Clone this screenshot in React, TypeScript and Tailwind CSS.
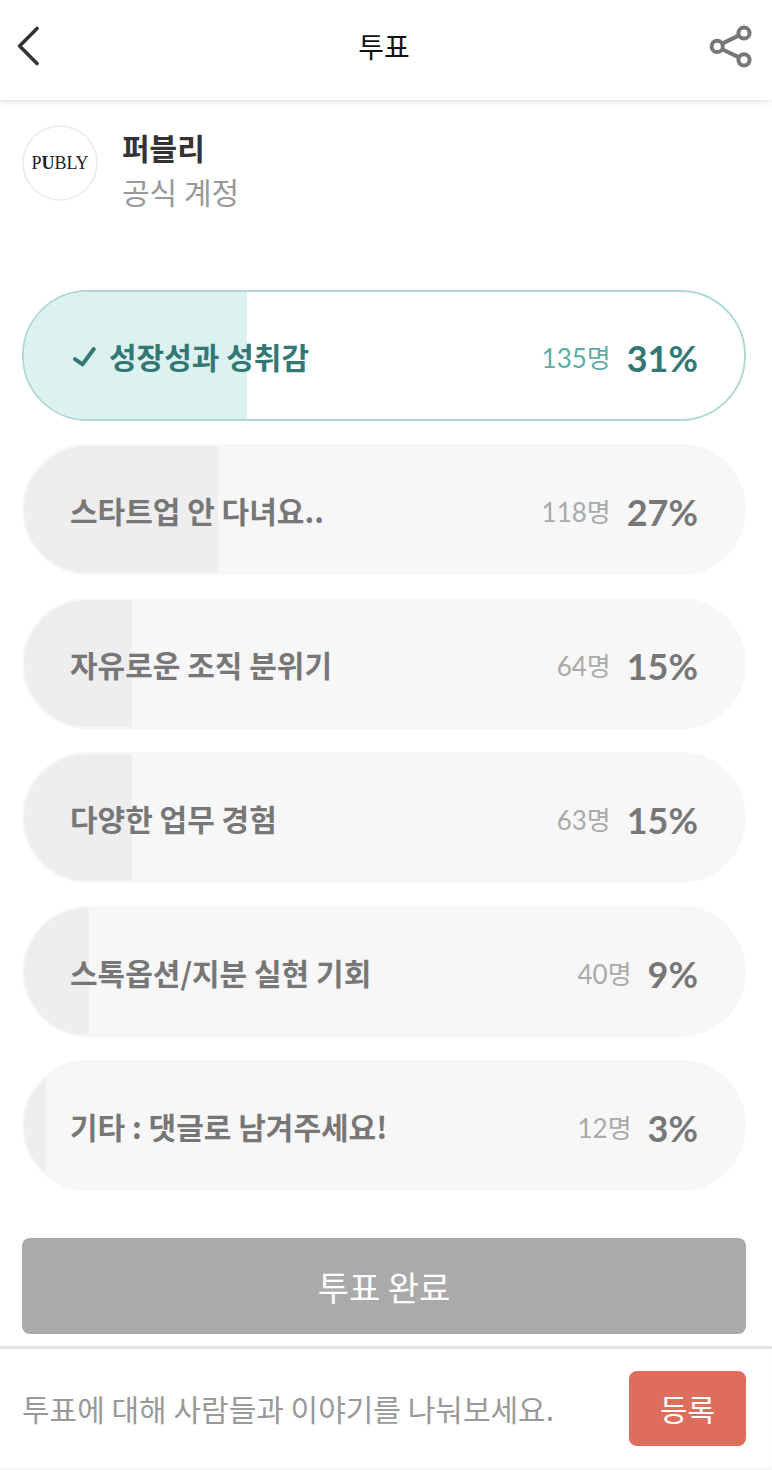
import { useState } from "react";

type Option = { label: string; count: number; percent: number };

const OPTIONS: Option[] = [
  { label: "성장성과 성취감", count: 135, percent: 31 },
  { label: "스타트업 안 다녀요..", count: 118, percent: 27 },
  { label: "자유로운 조직 분위기", count: 64, percent: 15 },
  { label: "다양한 업무 경험", count: 63, percent: 15 },
  { label: "스톡옵션/지분 실현 기회", count: 40, percent: 9 },
  { label: "기타 : 댓글로 남겨주세요!", count: 12, percent: 3 },
];

function Header() {
  return (
    <header className="relative z-10 grid h-[100px] grid-cols-[1fr_auto_1fr] items-center bg-white pb-2 pl-4 pr-5 shadow-[0_1px_7px_rgba(0,0,0,0.15)]">
      <button type="button" aria-label="뒤로" className="justify-self-start">
        <svg width="26" height="40" viewBox="0 0 26 40" fill="none" stroke="#333333" strokeWidth="3.6" strokeLinecap="round" strokeLinejoin="round" className="block">
          <path d="M21 2.5L3.6 20L21 37.5" />
        </svg>
      </button>
      <h1 className="text-[28px] leading-10 font-normal text-[#111111]">투표</h1>
      <button type="button" aria-label="공유" className="justify-self-end">
        <svg width="44" height="44" viewBox="0 0 44 44" fill="none" stroke="#777777" strokeWidth="4" className="block">
          <circle cx="9.2" cy="22.4" r="5.6" />
          <circle cx="36" cy="9" r="5.6" />
          <circle cx="36" cy="35.8" r="5.6" />
          <path d="M14.2 19.6L31 11.4M14.2 25.2L31 33.4" />
        </svg>
      </button>
    </header>
  );
}

function Author() {
  return (
    <section className="flex items-start gap-6 pt-[25px]">
      <div className="flex size-[76px] shrink-0 items-center justify-center rounded-full border-2 border-[#eeeeee] font-['Liberation_Serif',serif] text-[18px] leading-6 text-[#222222]">
        <span>
          P<b>U</b>BLY
        </span>
      </div>
      <div>
        <p className="text-[30px] leading-[44px] font-bold text-[#333333]">퍼블리</p>
        <p className="text-[30px] leading-[44px] text-[#999999]">공식 계정</p>
      </div>
    </section>
  );
}

function OptionRow({ option, selected, onSelect }: { option: Option; selected: boolean; onSelect: () => void }) {
  return (
    <li>
      <button
        type="button"
        aria-pressed={selected}
        onClick={onSelect}
        className={
          "relative flex h-[131px] w-full items-center overflow-hidden rounded-full border-2 px-[46px] text-left " +
          (selected ? "border-[#b0d9d6] bg-white text-[#337873]" : "border-[#f7f7f7] bg-[#f7f7f7] text-[#777777]")
        }
      >
        <span
          className={"absolute inset-y-0 left-0 " + (selected ? "bg-[#dcf2f0]" : "bg-[#eeeeee]")}
          style={{ width: `${option.percent}%` }}
        />
        <span className="relative flex flex-1 items-center gap-3">
          {selected && (
            <svg width="27" height="24" viewBox="0 0 27 24" fill="none" stroke="currentColor" strokeWidth="4" strokeLinecap="round" strokeLinejoin="round">
              <path d="M5 15.2L12.5 20.4L23.8 5" />
            </svg>
          )}
          <span className="text-[30px] leading-10 font-bold">{option.label}</span>
        </span>
        <span className="relative flex items-center gap-4 pt-1 font-['Lato','Noto_Sans_CJK_KR',sans-serif]">
          <span className={"text-[26px] leading-10 " + (selected ? "text-[#5fada8]" : "text-[#aaaaaa]")}>{option.count}명</span>
          <span className="text-[36px] leading-10 font-bold">{option.percent}%</span>
        </span>
      </button>
    </li>
  );
}

export default function App() {
  const [selected, setSelected] = useState(0);
  return (
    <div className="min-h-screen bg-white font-['Noto_Sans_CJK_KR',sans-serif]">
      <Header />
      <main className="pb-3 pl-[22px] pr-[26px]">
        <Author />
        <ul className="mt-[77px] flex flex-col gap-[23px]">
          {OPTIONS.map((option, i) => (
            <OptionRow key={option.label} option={option} selected={i === selected} onSelect={() => setSelected(i)} />
          ))}
        </ul>
        <button type="button" className="mt-[47px] h-24 w-full rounded-lg bg-[#aaaaaa] text-[34px] text-white">
          투표 완료
        </button>
      </main>
      <form
        className="flex items-center gap-6 border-t-3 border-[#e3e3e3] pt-[22px] pb-6 pl-[22px] pr-[26px] shadow-[inset_0_-3px_3px_-1px_rgba(0,0,0,0.05)]"
        onSubmit={(e) => e.preventDefault()}
      >
        <input
          type="text"
          aria-label="댓글"
          placeholder="투표에 대해 사람들과 이야기를 나눠보세요."
          className="h-11 min-w-0 flex-1 text-[30px] text-[#333333] outline-none placeholder:text-[#999999]"
        />
        <button type="submit" className="h-[75px] w-[117px] shrink-0 rounded-lg bg-[#de6e5b] text-[30px] text-white">
          등록
        </button>
      </form>
    </div>
  );
}
